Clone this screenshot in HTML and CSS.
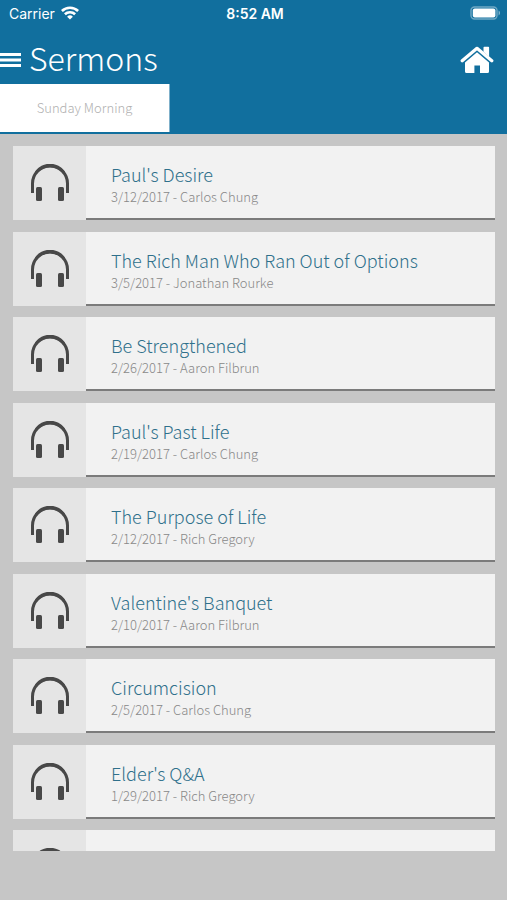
FILE: index.html
```
<!DOCTYPE html>
<html lang="en">
<head>
    <meta charset="UTF-8">
    <meta name="viewport" content="width=device-width, initial-scale=1.0">
    <title>Sermons</title>
    <link rel="stylesheet" href="styles.css">
</head>
<body>
    <svg class="symbols" width="0" height="0" aria-hidden="true">
        <symbol id="headphones" viewBox="0 0 38 38">
            <path d="M1.5 29V19.5a17.5 17.5 0 0 1 35 0V29" fill="none" stroke="#484848" stroke-width="3"/>
            <path d="M4 7.5a18.4 18.4 0 0 1 30 0l-2 2a16.5 16.5 0 0 0-26 0z" fill="#484848"/>
            <rect x="5" y="23" width="6" height="14" rx="1.5" fill="#484848"/>
            <rect x="27" y="23" width="6" height="14" rx="1.5" fill="#484848"/>
        </symbol>
    </svg>

    <header class="header">
        <div class="status-bar">
            <div class="carrier">
                <span>Carrier</span>
                <svg width="18" height="14" viewBox="0 0 18 14" fill="none" stroke="#fff" stroke-width="2.6">
                    <path d="M.9 5a11.6 11.6 0 0 1 16.2 0"/>
                    <path d="M3.9 8.3a7.3 7.3 0 0 1 10.2 0"/>
                    <path d="M9 13.6L6.1 10.7a4.1 4.1 0 0 1 5.8 0z" fill="#fff" stroke="none"/>
                </svg>
            </div>
            <time class="clock">8:52 AM</time>
            <div class="battery">
                <svg width="31" height="14" viewBox="0 0 31 14">
                    <rect x="1" y="1" width="26" height="12" rx="3.5" fill="none" stroke="#fff" stroke-opacity=".4" stroke-width="1.4"/>
                    <rect x="2.8" y="2.4" width="22.6" height="9.2" rx="2" fill="#fff"/>
                    <path d="M28.6 4.6c1.8.7 1.8 4.1 0 4.8z" fill="#fff" fill-opacity=".5"/>
                </svg>
            </div>
        </div>

        <div class="title-bar">
            <button class="icon-button" type="button" aria-label="Menu">
                <svg width="21" height="14" viewBox="0 0 21 14" fill="#fff">
                    <path d="M0 0h21v3H0zM0 5.5h21v3H0zM0 11h21v3H0z"/>
                </svg>
            </button>
            <h1 class="title">Sermons</h1>
            <a class="home" href="#" aria-label="Home">
                <svg width="34" height="28" viewBox="0 0 34 28" fill="#fff">
                    <path d="M23.5 1.5q0-.8.8-.8h4q.8 0 .8.8v9.3l-5.6-5z"/>
                    <path d="M2.2 14.8L17 2.3l14.8 12.5" fill="none" stroke="#fff" stroke-width="3.2" stroke-linecap="round" stroke-linejoin="round"/>
                    <path d="M17 6.2L29 16.4V25.500q0 1.500-1.500 1.500H20v-7.500h-5.600V27H6.500Q5 27 5 25.500V16.400z"/>
                </svg>
            </a>
        </div>

        <nav class="tabs">
            <button class="tab" type="button">Sunday Morning</button>
        </nav>
    </header>

    <main class="content">
        <ul class="sermons">
            <li class="sermon">
                <div class="thumb"><svg class="headphones"><use href="#headphones"/></svg></div>
                <a class="details" href="#">
                    <span class="name">Paul's Desire</span>
                    <span class="meta">3/12/2017 - Carlos Chung</span>
                </a>
            </li>
            <li class="sermon">
                <div class="thumb"><svg class="headphones"><use href="#headphones"/></svg></div>
                <a class="details" href="#">
                    <span class="name">The Rich Man Who Ran Out of Options</span>
                    <span class="meta">3/5/2017 - Jonathan Rourke</span>
                </a>
            </li>
            <li class="sermon">
                <div class="thumb"><svg class="headphones"><use href="#headphones"/></svg></div>
                <a class="details" href="#">
                    <span class="name">Be Strengthened</span>
                    <span class="meta">2/26/2017 - Aaron Filbrun</span>
                </a>
            </li>
            <li class="sermon">
                <div class="thumb"><svg class="headphones"><use href="#headphones"/></svg></div>
                <a class="details" href="#">
                    <span class="name">Paul's Past Life</span>
                    <span class="meta">2/19/2017 - Carlos Chung</span>
                </a>
            </li>
            <li class="sermon">
                <div class="thumb"><svg class="headphones"><use href="#headphones"/></svg></div>
                <a class="details" href="#">
                    <span class="name">The Purpose of Life</span>
                    <span class="meta">2/12/2017 - Rich Gregory</span>
                </a>
            </li>
            <li class="sermon">
                <div class="thumb"><svg class="headphones"><use href="#headphones"/></svg></div>
                <a class="details" href="#">
                    <span class="name">Valentine's Banquet</span>
                    <span class="meta">2/10/2017 - Aaron Filbrun</span>
                </a>
            </li>
            <li class="sermon">
                <div class="thumb"><svg class="headphones"><use href="#headphones"/></svg></div>
                <a class="details" href="#">
                    <span class="name">Circumcision</span>
                    <span class="meta">2/5/2017 - Carlos Chung</span>
                </a>
            </li>
            <li class="sermon">
                <div class="thumb"><svg class="headphones"><use href="#headphones"/></svg></div>
                <a class="details" href="#">
                    <span class="name">Elder's Q&amp;A</span>
                    <span class="meta">1/29/2017 - Rich Gregory</span>
                </a>
            </li>
            <li class="sermon">
                <div class="thumb"><svg class="headphones"><use href="#headphones"/></svg></div>
                <a class="details" href="#"></a>
            </li>
        </ul>
    </main>
    <footer class="footer"></footer>
</body>
</html>
```
FILE: styles.css
```
* {
    box-sizing: border-box;
}

body {
    display: flex;
    flex-direction: column;
    height: 100vh;
    margin: 0;
    background-color: #c6c6c6;
    font-family: "Noto Sans CJK JP", "Open Sans", sans-serif;
    font-weight: 300;
}

button {
    padding: 0;
    border: none;
    background: none;
    font: inherit;
    cursor: pointer;
}

a {
    color: inherit;
    text-decoration: none;
}

svg {
    display: block;
}

.symbols {
    position: absolute;
}

.header {
    padding-bottom: 2px;
    background-color: #116f9e;
    color: #fff;
}

.status-bar {
    display: grid;
    grid-template-columns: 1fr auto 1fr;
    align-items: center;
    height: 26px;
    padding: 0 6px 0 9px;
    font-family: Inter, sans-serif;
    font-size: 14px;
    font-weight: 400;
}

.carrier {
    display: flex;
    align-items: center;
    gap: 6px;
}

.clock {
    font-weight: 600;
}

.battery {
    justify-self: end;
}

.title-bar {
    display: flex;
    align-items: center;
    height: 58px;
    padding: 10px 13px 0 0;
}

.title {
    flex: 1;
    margin: 0 0 6px 8px;
    font-size: 32px;
    font-weight: 300;
    line-height: 40px;
}

.tabs {
    display: flex;
}

.tab {
    width: 170px;
    height: 48px;
    padding-bottom: 2px;
    border-right: 1px solid #7fb0ca;
    background-color: #fff;
    color: #b0b0b0;
    font-size: 13px;
}

.content {
    flex: 1;
    min-height: 0;
    overflow-y: auto;
    scrollbar-width: none;
}

.sermons {
    margin: 0;
    padding: 12px 12px 0 13px;
    list-style: none;
}

.sermon {
    display: flex;
    height: 74px;
    margin-bottom: 11px;
}

.sermon:nth-child(odd) {
    margin-bottom: 12px;
}

.thumb {
    display: flex;
    align-items: center;
    justify-content: center;
    width: 73px;
    background-color: #e5e5e5;
}

.headphones {
    width: 38px;
    height: 38px;
}

.details {
    display: flex;
    flex: 1;
    flex-direction: column;
    justify-content: center;
    padding: 5px 0 0 25px;
    border-bottom: 2px solid #7b7b7b;
    background-color: #f2f2f2;
}

.name {
    color: #2f708b;
    font-size: 18px;
    line-height: 24px;
}

.meta {
    color: #888;
    font-size: 13px;
    line-height: 22px;
}

.footer {
    height: 49px;
}
```
